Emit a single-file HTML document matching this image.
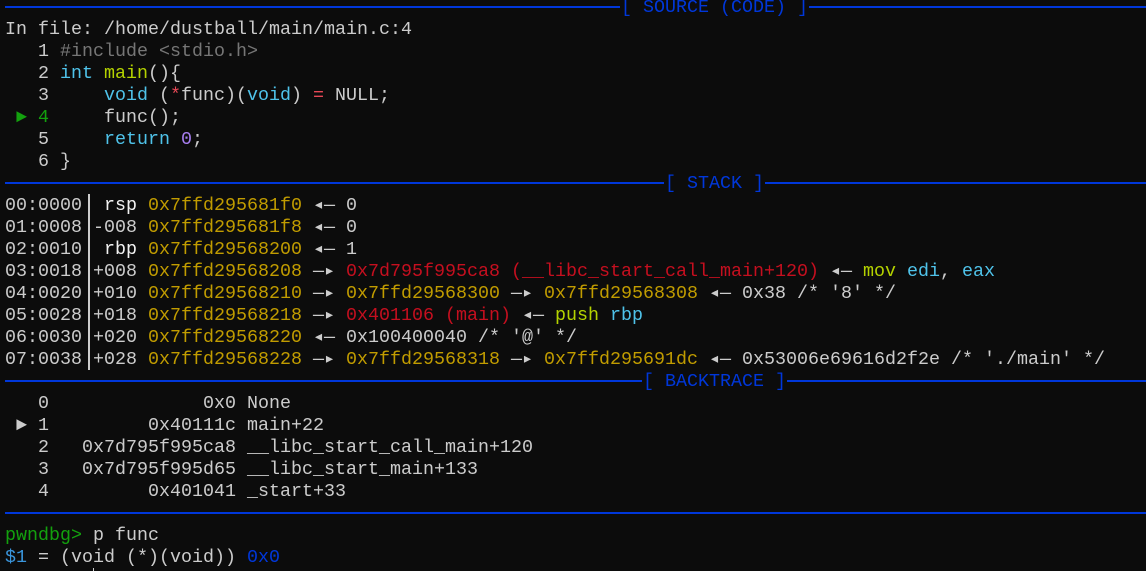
<!DOCTYPE html>
<html><head><meta charset="utf-8"><style>
html,body{margin:0;padding:0;background:#0c0c0c;width:1146px;height:571px;overflow:hidden}
body{position:relative;font-family:"Liberation Mono","DejaVu Sans Mono",monospace;font-size:18.33px;color:#cccccc}
.r{position:absolute;left:5px;height:22px;line-height:22px;white-space:pre;margin-top:1px}
.hl{position:absolute;left:5px;right:0;height:2px;background:#0037da}
.ht{position:absolute;height:22px;line-height:22px;white-space:pre;color:#0037da;background:#0c0c0c;padding:0 1px;margin-top:1px}
.y{color:#c19c00}.rd{color:#c50f1f}.g{color:#13a10e}.lg{color:#b4d200}.c{color:#4fc3ea}.p{color:#e74856}.v{color:#a77ef0}.gr{color:#767676}.w{color:#f2f2f2}.b{color:#0037da}.s{color:#3a96dd}
.bar{position:absolute;left:88px;top:194px;width:2px;height:176px;background:#cccccc}
</style></head><body>
<div class="hl" style="top:6px"></div><div class="ht" style="top:-4px;left:620px">[ SOURCE (CODE) ]</div>
<div class="r" style="top:18px">In file: /home/dustball/main/main.c:4</div>
<div class="r" style="top:40px">   1 <span class="gr">#include &lt;stdio.h&gt;</span></div>
<div class="r" style="top:62px">   2 <span class="c">int</span> <span class="lg">main</span>(){</div>
<div class="r" style="top:84px">   3     <span class="c">void</span> (<span class="p">*</span>func)(<span class="c">void</span>) <span class="p">=</span> NULL;</div>
<div class="r" style="top:106px"> <span class="g">► 4</span>     func();</div>
<div class="r" style="top:128px">   5     <span class="c">return</span> <span class="v">0</span>;</div>
<div class="r" style="top:150px">   6 }</div>
<div class="hl" style="top:182px"></div><div class="ht" style="top:172px;left:664px">[ STACK ]</div>
<div class="bar"></div>
<div class="r" style="top:194px">00:0000  <span class="w">rsp</span> <span class="y">0x7ffd295681f0</span> ◂— 0</div>
<div class="r" style="top:216px">01:0008 -008 <span class="y">0x7ffd295681f8</span> ◂— 0</div>
<div class="r" style="top:238px">02:0010  <span class="w">rbp</span> <span class="y">0x7ffd29568200</span> ◂— 1</div>
<div class="r" style="top:260px">03:0018 +008 <span class="y">0x7ffd29568208</span> —▸ <span class="rd">0x7d795f995ca8 (__libc_start_call_main+120)</span> ◂— <span class="lg">mov</span> <span class="c">edi</span>, <span class="c">eax</span></div>
<div class="r" style="top:282px">04:0020 +010 <span class="y">0x7ffd29568210</span> —▸ <span class="y">0x7ffd29568300</span> —▸ <span class="y">0x7ffd29568308</span> ◂— 0x38 /* '8' */</div>
<div class="r" style="top:304px">05:0028 +018 <span class="y">0x7ffd29568218</span> —▸ <span class="rd">0x401106 (main)</span> ◂— <span class="lg">push</span> <span class="c">rbp</span></div>
<div class="r" style="top:326px">06:0030 +020 <span class="y">0x7ffd29568220</span> ◂— 0x100400040 /* '@' */</div>
<div class="r" style="top:348px">07:0038 +028 <span class="y">0x7ffd29568228</span> —▸ <span class="y">0x7ffd29568318</span> —▸ <span class="y">0x7ffd295691dc</span> ◂— 0x53006e69616d2f2e /* './main' */</div>
<div class="hl" style="top:380px"></div><div class="ht" style="top:370px;left:642px">[ BACKTRACE ]</div>
<div class="r" style="top:392px;left:16px">  0              0x0 None</div>
<div class="r" style="top:414px;left:16px">► 1         0x40111c main+22</div>
<div class="r" style="top:436px;left:16px">  2   0x7d795f995ca8 __libc_start_call_main+120</div>
<div class="r" style="top:458px;left:16px">  3   0x7d795f995d65 __libc_start_main+133</div>
<div class="r" style="top:480px;left:16px">  4         0x401041 _start+33</div>
<div class="hl" style="top:512px"></div>
<div class="r" style="top:524px"><span class="g">pwndbg&gt;</span> p func</div>
<div class="r" style="top:546px"><span class="s">$1</span> = (void (*)(void)) <span class="b">0x0</span></div>
<div style="position:absolute;left:93px;top:568px;width:1px;height:3px;background:#ccc"></div>
</body></html>
